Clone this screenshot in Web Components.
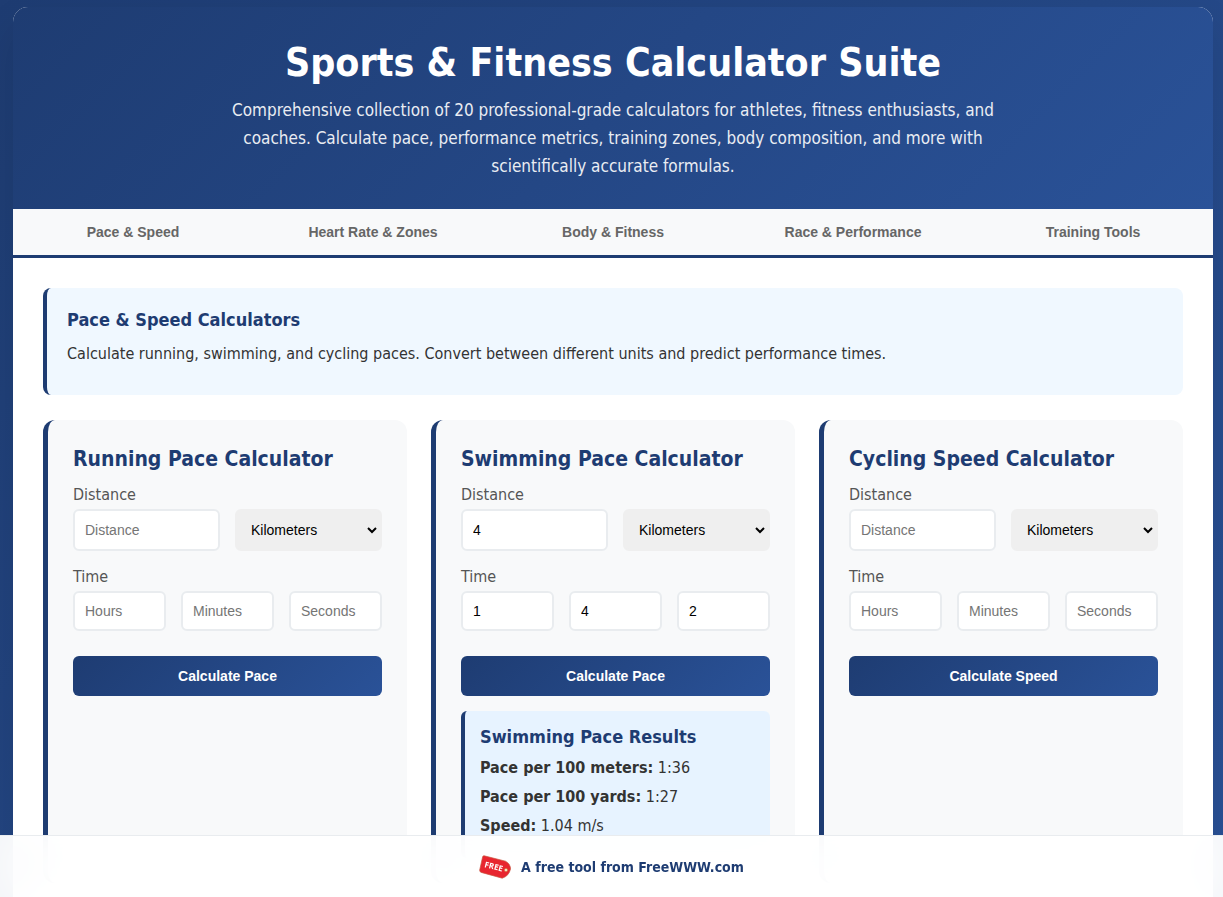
<!DOCTYPE html>
<html lang="en">
<head>
<meta charset="utf-8">
<meta name="viewport" content="width=device-width, initial-scale=1">
<title>Sports &amp; Fitness Calculator Suite</title>
<style>
    :root {
        --navy: #1e3c72;
        --blue: #2a5298;
        --brand: linear-gradient(135deg, var(--navy) 0%, var(--blue) 100%);
        --ui-font: "Liberation Sans", Arial, sans-serif;
    }

    body {
        margin: 0;
        padding: 7px 10px 62px 13px;
        background: var(--brand);
        color: #333;
        font: 16px/24px "DejaVu Sans Condensed", "DejaVu Sans", sans-serif;
    }
</style>
</head>
<body>
<calc-suite>
    <suite-header slot="header" heading="Sports &amp; Fitness Calculator Suite">
        Comprehensive collection of 20 professional-grade calculators for athletes, fitness enthusiasts, and coaches. Calculate pace, performance metrics, training zones, body composition, and more with scientifically accurate formulas.
    </suite-header>
    <suite-tabs slot="tabs" tabs="Pace &amp; Speed|Heart Rate &amp; Zones|Body &amp; Fitness|Race &amp; Performance|Training Tools"></suite-tabs>
    <section-intro slot="intro" heading="Pace &amp; Speed Calculators">
        Calculate running, swimming, and cycling paces. Convert between different units and predict performance times.
    </section-intro>
    <pace-calculator heading="Running Pace Calculator" action="Calculate Pace"></pace-calculator>
    <pace-calculator heading="Swimming Pace Calculator" action="Calculate Pace" distance="4" hours="1" minutes="4" seconds="2">
        <calc-results heading="Swimming Pace Results">
            <result-line label="Pace per 100 meters:">1:36</result-line>
            <result-line label="Pace per 100 yards:">1:27</result-line>
            <result-line label="Speed:">1.04 m/s</result-line>
        </calc-results>
    </pace-calculator>
    <pace-calculator heading="Cycling Speed Calculator" action="Calculate Speed"></pace-calculator>
</calc-suite>
<free-footer>A free tool from FreeWWW.com</free-footer>

<script>
/**
 * Creates a template from a string of markup.
 */
function createTemplate(html) {
    const template = document.createElement("template");
    template.innerHTML = html;
    return template;
}

/**
 * Shared base: clones the template of the class into an open shadow root and
 * copies the heading attribute to the element marked with .heading.
 */
class SuiteElement extends HTMLElement {
    constructor() {
        super();

        this.attachShadow({mode: "open"});
        this.shadowRoot.appendChild(this.constructor.template.content.cloneNode(true));
    }

    connectedCallback() {
        const heading = this.shadowRoot.querySelector(".heading");

        if(heading) {
            heading.textContent = this.getAttribute("heading");
        }
    }
}

/* --- Page frame --- */

class CalcSuite extends SuiteElement {
    static template = createTemplate(`
        <style>
            :host {
                display: block;
                max-width: 1200px;
                margin: 0 auto;
                background: #fff;
                border-radius: 15px;
                box-shadow: 0 20px 40px rgba(0, 0, 0, 0.1);
                overflow: hidden;
            }

            main {
                padding: 30px;
            }

            .grid {
                display: grid;
                grid-template-columns: repeat(auto-fit, minmax(320px, 1fr));
                gap: 24px;
                margin-top: 25px;
            }
        </style>
        <slot name="header"></slot>
        <slot name="tabs"></slot>
        <main>
            <slot name="intro"></slot>
            <div class="grid"><slot></slot></div>
        </main>
    `);
}

class SuiteHeader extends SuiteElement {
    static template = createTemplate(`
        <style>
            :host {
                display: block;
                padding: 30px 30px 29px;
                background: var(--brand);
                color: #fff;
                text-align: center;
            }

            h1 {
                margin: 0 0 7px;
                font-size: 39px;
                line-height: 52px;
            }

            p {
                max-width: 800px;
                margin: 0 auto;
                font-size: 17px;
                line-height: 28px;
                opacity: 0.9;
            }
        </style>
        <header>
            <h1 class="heading"></h1>
            <p><slot></slot></p>
        </header>
    `);
}

class SuiteTabs extends SuiteElement {
    static template = createTemplate(`
        <style>
            :host {
                display: block;
                background: #f8f9fa;
                border-bottom: 3px solid var(--navy);
            }

            nav {
                display: flex;
            }

            button {
                flex: 1;
                padding: 15px 20px;
                border: 0;
                background: transparent;
                color: #666;
                font: bold 14px/16px var(--ui-font);
                cursor: pointer;
            }
        </style>
        <nav></nav>
    `);

    connectedCallback() {
        const nav = this.shadowRoot.querySelector("nav");

        nav.replaceChildren(...this.getAttribute("tabs").split("|").map(name => {
            const button = document.createElement("button");
            button.type = "button";
            button.textContent = name;
            return button;
        }));
    }
}

class SectionIntro extends SuiteElement {
    static template = createTemplate(`
        <style>
            :host {
                display: block;
                padding: 20px;
                background: #f0f8ff;
                border-left: 4px solid var(--navy);
                border-radius: 8px;
            }

            h2 {
                margin: 0 0 10px;
                color: var(--navy);
                font-size: 18px;
                line-height: 24px;
            }

            p {
                margin: 0 0 9px;
            }
        </style>
        <h2 class="heading"></h2>
        <p><slot></slot></p>
    `);
}

/* --- Calculators --- */

class PaceCalculator extends SuiteElement {
    static template = createTemplate(`
        <style>
            :host {
                display: block;
                padding: 25px;
                background: #f8f9fa;
                border-left: 5px solid var(--navy);
                border-radius: 12px;
            }

            h3 {
                margin: 0 0 10px;
                color: var(--navy);
                font-size: 21px;
                line-height: 28px;
            }

            label {
                display: block;
                margin-bottom: 2px;
                color: #555;
            }

            .row {
                display: grid;
                grid-auto-flow: column;
                grid-auto-columns: minmax(0, 1fr);
                gap: 15px;
                margin-bottom: 14px;
            }

            input, select {
                width: 100%;
                box-sizing: border-box;
                border: 2px solid #e9ecef;
                border-radius: 6px;
                font: 14px/16px var(--ui-font);
            }

            input {
                padding: 10px;
                background: #fff;
                color: #000;
            }

            select {
                padding: 10px 0 10px 10px;
                background: #efefef;
                border-color: #efefef;
                color: #000;
            }

            button {
                display: block;
                width: 100%;
                margin-top: 25px;
                padding: 12px;
                border: 0;
                border-radius: 6px;
                background: var(--brand);
                color: #fff;
                font: bold 14px/16px var(--ui-font);
                cursor: pointer;
            }

            ::slotted(*) {
                margin-top: 15px;
            }
        </style>
        <form>
            <h3 class="heading"></h3>
            <label for="distance">Distance</label>
            <div class="row">
                <input id="distance" placeholder="Distance" inputmode="decimal">
                <select aria-label="Distance unit">
                    <option>Kilometers</option>
                    <option>Miles</option>
                    <option>Meters</option>
                    <option>Yards</option>
                </select>
            </div>
            <label for="hours">Time</label>
            <div class="row">
                <input id="hours" placeholder="Hours" inputmode="numeric">
                <input id="minutes" placeholder="Minutes" inputmode="numeric" aria-label="Minutes">
                <input id="seconds" placeholder="Seconds" inputmode="numeric" aria-label="Seconds">
            </div>
            <button type="button"></button>
        </form>
        <slot></slot>
    `);

    connectedCallback() {
        super.connectedCallback();
        this.shadowRoot.querySelector("button").textContent = this.getAttribute("action");

        // attributes carry the starting values of the text boxes
        for(const input of this.shadowRoot.querySelectorAll("input")) {
            input.value = this.getAttribute(input.id) || "";
        }
    }
}

class CalcResults extends SuiteElement {
    static template = createTemplate(`
        <style>
            :host {
                display: block;
                padding: 15px;
                background: #e7f3ff;
                border-left: 4px solid var(--navy);
                border-radius: 6px;
            }

            h4 {
                margin: 0 0 8px;
                color: var(--navy);
                font-size: 18px;
                line-height: 22px;
            }
        </style>
        <h4 class="heading"></h4>
        <slot></slot>
    `);
}

class ResultLine extends SuiteElement {
    static template = createTemplate(`
        <style>
            :host {
                display: block;
                margin-bottom: 5px;
            }
        </style>
        <strong></strong>
        <slot></slot>
    `);

    connectedCallback() {
        this.shadowRoot.querySelector("strong").textContent = this.getAttribute("label");
    }
}

/* --- Footer bar --- */

class FreeFooter extends SuiteElement {
    static template = createTemplate(`
        <style>
            :host {
                position: fixed;
                inset: auto 0 0 0;
                background: rgba(255, 255, 255, 0.95);
                border-top: 1px solid #e9ecef;
                backdrop-filter: blur(20px);
            }

            footer {
                display: flex;
                justify-content: center;
                padding: 16px 15px 14px;
            }

            a {
                display: flex;
                align-items: center;
                gap: 10px;
                color: var(--navy);
                font-weight: bold;
                font-size: 14px;
                line-height: 31px;
                text-decoration: none;
            }

            svg {
                display: block;
            }

            text {
                font: bold 8px "Open Sans", sans-serif;
            }
        </style>
        <footer>
            <a href="#">
                <svg width="32" height="28" viewBox="0 0 32 28" aria-hidden="true">
                    <path d="M5.2 1.8 L26.5 7.2 Q31.5 10 31.5 15 Q30 22 23.2 24.2 L2.2 18.4 Q.4 17.8 .7 16 L3.6 3 Q4 1.5 5.2 1.8Z" fill="#e8252f" stroke="#c8553f" stroke-width=".7"/>
                    <circle cx="27" cy="16" r="1.6" fill="#fbe3dc" stroke="#c9822f" stroke-width=".6"/>
                    <text x="5" y="13" transform="rotate(14 5 13)" fill="#fff">FREE</text>
                </svg>
                <span><slot></slot></span>
            </a>
        </footer>
    `);
}

customElements.define("calc-suite", CalcSuite);
customElements.define("suite-header", SuiteHeader);
customElements.define("suite-tabs", SuiteTabs);
customElements.define("section-intro", SectionIntro);
customElements.define("pace-calculator", PaceCalculator);
customElements.define("calc-results", CalcResults);
customElements.define("result-line", ResultLine);
customElements.define("free-footer", FreeFooter);
</script>
</body>
</html>
